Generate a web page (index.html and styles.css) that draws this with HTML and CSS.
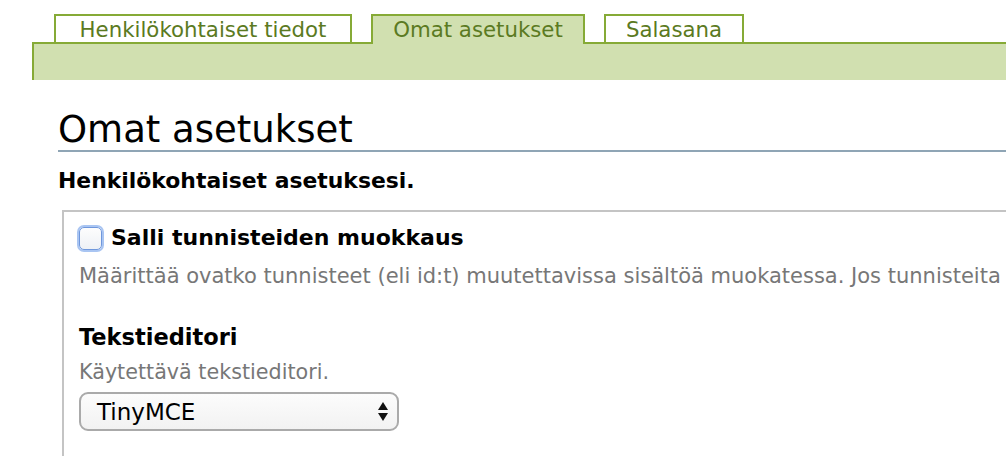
FILE: index.html
```html
<!DOCTYPE html>
<html lang="fi">
<head>
<meta charset="utf-8">
<title>Omat asetukset</title>
<link rel="stylesheet" href="styles.css">
</head>
<body>
<div class="nav">
  <div class="tabs">
    <a class="tab tab-personal">Henkilökohtaiset tiedot</a>
    <a class="tab tab-settings active">Omat asetukset</a>
    <a class="tab tab-password">Salasana</a>
  </div>
  <div class="band"></div>
</div>
<div class="content">
  <h1 class="title">Omat asetukset</h1>
  <p class="intro">Henkilökohtaiset asetuksesi.</p>
  <div class="fieldset">
    <div class="field">
      <label class="check-label"><span class="checkbox"></span>Salli tunnisteiden muokkaus</label>
      <div class="desc">Määrittää ovatko tunnisteet (eli id:t) muutettavissa sisältöä muokatessa. Jos tunnisteita</div>
    </div>
    <div class="field">
      <div class="label">Tekstieditori</div>
      <div class="desc small">Käytettävä tekstieditori.</div>
      <div class="select">
        <span>TinyMCE</span>
        <svg class="arrows" width="10" height="19" viewBox="0 0 10 19"><path d="M5 0 L10 8 H0 Z M5 19 L10 11 H0 Z" fill="#111"/></svg>
      </div>
    </div>
  </div>
</div>
</body>
</html>
```
FILE: styles.css
```css
html, body {
  margin: 0;
  padding: 0;
  background: #fff;
  overflow: hidden;
}
body {
  font-family: "DejaVu Sans", "Liberation Sans", sans-serif;
  color: #000;
  width: 1006px;
  height: 456px;
}
.nav {
  padding-top: 14px;
}
.tabs {
  display: flex;
  gap: 19px;
  padding-left: 54px;
  height: 28px;
  align-items: flex-start;
}
.tab {
  box-sizing: border-box;
  height: 28px;
  border: 2px solid #86aa36;
  border-bottom: none;
  font-size: 21.3px;
  line-height: 28px;
  color: #5b7a22;
  background: #fff;
  white-space: nowrap;
  text-align: center;
}
.tab-personal { width: 298px; }
.tab-settings { width: 214px; }
.tab-password { width: 140px; }
.tab.active {
  height: 30px;
  margin-bottom: -2px;
  position: relative;
  z-index: 1;
  background: #d1e0b0;
}
.band {
  margin-left: 32px;
  height: 36px;
  border-top: 2px solid #86aa36;
  border-left: 2px solid #86aa36;
  background: #d1e0b0;
}
.content {
  padding-left: 58px;
}
.title {
  margin: 30px 0 0;
  font-size: 37px;
  font-weight: normal;
  line-height: 40px;
  border-bottom: 2px solid #8fa5b5;
}
.intro {
  margin: 16px 0 0;
  font-size: 21.9px;
  font-weight: bold;
  line-height: 26px;
  white-space: nowrap;
}
.fieldset {
  margin: 16px 0 0 4px;
  border-top: 2px solid #c4c4c4;
  border-left: 2px solid #c4c4c4;
  padding: 11px 0 0 15px;
  height: 233px;
}
.field + .field {
  margin-top: 34px;
}
.check-label {
  display: flex;
  align-items: center;
  gap: 9px;
  font-size: 22px;
  font-weight: bold;
  line-height: 30px;
  white-space: nowrap;
}
.checkbox {
  width: 23px;
  height: 23px;
  box-sizing: border-box;
  border: 1px solid #6f97dc;
  border-radius: 5px;
  box-shadow: 0 0 0 2px #a9c5f2;
  background: linear-gradient(#fdfdfd, #eef1f6);
}
.label {
  font-size: 22.5px;
  font-weight: bold;
  line-height: 28px;
}
.desc {
  font-size: 21px;
  color: #777;
  line-height: 26px;
  margin-top: 10px;
  white-space: nowrap;
}
.desc.small {
  font-size: 20.7px;
  margin-top: 8px;
}
.select {
  margin-top: 7px;
  box-sizing: border-box;
  width: 320px;
  height: 39px;
  border: 2px solid #aaa;
  border-radius: 9px;
  background: linear-gradient(#fcfcfc, #f2f2f2);
  display: flex;
  align-items: center;
  justify-content: space-between;
  padding: 0 9px 0 16px;
  font-size: 23px;
}
```
